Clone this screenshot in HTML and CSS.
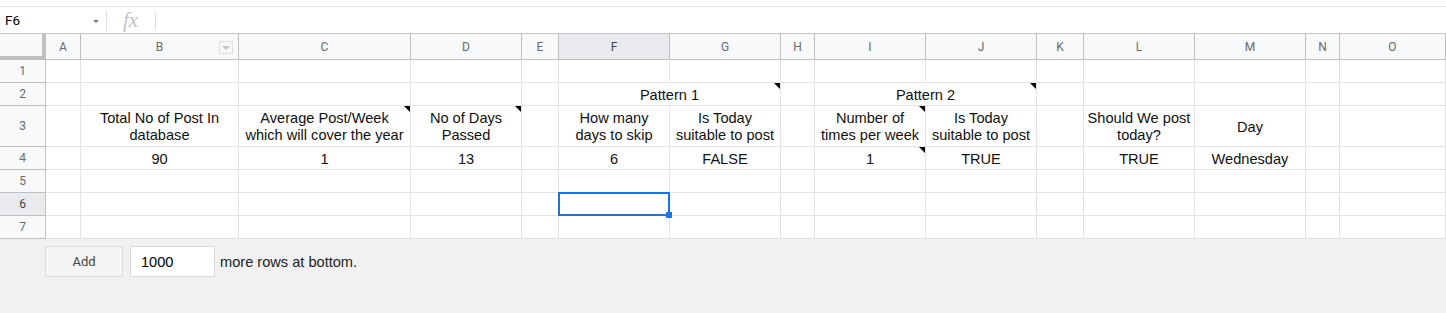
FILE: index.html
```html
<!DOCTYPE html>
<html>
<head>
<meta charset="utf-8">
<link rel="stylesheet" href="styles.css">
</head>
<body>
<div class="topgap"></div>
<div class="fbar">
  <div class="namebox"><span class="ref">F6</span><span class="caret"></span></div>
  <div class="fx">fx</div>
  <div class="finput"></div>
</div>
<div class="sheet">
  <!-- header row -->
  <div class="corner"></div>
  <div class="ch">A</div>
  <div class="ch chb">B<span class="filter"><span class="ftri"></span></span></div>
  <div class="ch">C</div>
  <div class="ch">D</div>
  <div class="ch">E</div>
  <div class="ch sel">F</div>
  <div class="ch">G</div>
  <div class="ch">H</div>
  <div class="ch">I</div>
  <div class="ch">J</div>
  <div class="ch">K</div>
  <div class="ch">L</div>
  <div class="ch">M</div>
  <div class="ch">N</div>
  <div class="ch">O</div>

  <!-- row 1 -->
  <div class="rh">1</div>
  <div class="c"></div><div class="c"></div><div class="c"></div><div class="c"></div><div class="c"></div>
  <div class="c"></div><div class="c"></div><div class="c"></div><div class="c"></div><div class="c"></div>
  <div class="c"></div><div class="c"></div><div class="c"></div><div class="c"></div><div class="c"></div>

  <!-- row 2 -->
  <div class="rh">2</div>
  <div class="c"></div><div class="c"></div><div class="c"></div><div class="c"></div><div class="c"></div>
  <div class="c span2 note">Pattern 1</div>
  <div class="c"></div>
  <div class="c span2 note">Pattern 2</div>
  <div class="c"></div><div class="c"></div><div class="c"></div><div class="c"></div><div class="c"></div>

  <!-- row 3 -->
  <div class="rh">3</div>
  <div class="c"></div>
  <div class="c">Total No of Post In<br>database</div>
  <div class="c note">Average Post/Week<br>which will cover the year</div>
  <div class="c note">No of Days<br>Passed</div>
  <div class="c"></div>
  <div class="c">How many<br>days to skip</div>
  <div class="c">Is Today<br>suitable to post</div>
  <div class="c"></div>
  <div class="c note">Number of<br>times per week</div>
  <div class="c">Is Today<br>suitable to post</div>
  <div class="c"></div>
  <div class="c">Should We post<br>today?</div>
  <div class="c">Day</div>
  <div class="c"></div>
  <div class="c"></div>

  <!-- row 4 -->
  <div class="rh">4</div>
  <div class="c"></div>
  <div class="c">90</div>
  <div class="c">1</div>
  <div class="c">13</div>
  <div class="c"></div>
  <div class="c">6</div>
  <div class="c">FALSE</div>
  <div class="c"></div>
  <div class="c note">1</div>
  <div class="c">TRUE</div>
  <div class="c"></div>
  <div class="c">TRUE</div>
  <div class="c">Wednesday</div>
  <div class="c"></div>
  <div class="c"></div>

  <!-- row 5 -->
  <div class="rh">5</div>
  <div class="c"></div><div class="c"></div><div class="c"></div><div class="c"></div><div class="c"></div>
  <div class="c"></div><div class="c"></div><div class="c"></div><div class="c"></div><div class="c"></div>
  <div class="c"></div><div class="c"></div><div class="c"></div><div class="c"></div><div class="c"></div>

  <!-- row 6 -->
  <div class="rh sel">6</div>
  <div class="c"></div><div class="c"></div><div class="c"></div><div class="c"></div><div class="c"></div>
  <div class="c active"><span class="selbox"><span class="handle"></span></span></div>
  <div class="c"></div><div class="c"></div><div class="c"></div><div class="c"></div>
  <div class="c"></div><div class="c"></div><div class="c"></div><div class="c"></div><div class="c"></div>

  <!-- row 7 -->
  <div class="rh">7</div>
  <div class="c"></div><div class="c"></div><div class="c"></div><div class="c"></div><div class="c"></div>
  <div class="c"></div><div class="c"></div><div class="c"></div><div class="c"></div><div class="c"></div>
  <div class="c"></div><div class="c"></div><div class="c"></div><div class="c"></div><div class="c"></div>
</div>
<div class="footer">
  <div class="addbtn">Add</div>
  <div class="rowsinput">1000</div>
  <div class="moretext">more rows at bottom.</div>
</div>
</body>
</html>
```

FILE: styles.css
```css
html, body {
  margin: 0;
  padding: 0;
  background: #ffffff;
  height: 100%;
}
body {
  font-family: "Liberation Sans", Arial, sans-serif;
  color: #000;
  overflow: hidden;
  display: flex;
  flex-direction: column;
}
.topgap {
  height: 6px;
  background: #fff;
}
.fbar {
  display: flex;
  align-items: stretch;
  height: 26px;
  border-top: 1px solid #e3e3e3;
  border-bottom: 1px solid #c4c7c5;
  background: #fff;
}
.namebox {
  width: 107px;
  box-sizing: border-box;
  display: flex;
  align-items: center;
  padding-left: 5px;
  position: relative;
  font-family: Roboto, "Liberation Sans", sans-serif;
  font-size: 13.5px;
  color: #000;
}
.namebox::after {
  content: "";
  position: absolute;
  right: 0;
  top: 3px;
  bottom: 2px;
  width: 1px;
  background: #e0e0e0;
}
.ref {
  flex: 1;
}
.caret {
  width: 0;
  height: 0;
  border-left: 3px solid transparent;
  border-right: 3px solid transparent;
  border-top: 3px solid #777;
  margin-right: 8px;
  margin-top: 2px;
}
.fx {
  width: 49px;
  box-sizing: border-box;
  display: flex;
  align-items: center;
  justify-content: center;
  font-family: "Liberation Serif", serif;
  font-style: italic;
  font-size: 21px;
  color: #c4c4c4;
  position: relative;
  padding-right: 2px;
}
.fx::after {
  content: "";
  position: absolute;
  right: 0;
  top: 5px;
  bottom: 3px;
  width: 1px;
  background: #e0e0e0;
}
.finput {
  flex: 1;
}

.sheet {
  display: grid;
  grid-template-columns: 46px 35px 158px 172px 111px 37px 111px 111px 34px 111px 111px 47px 111px 111px 34px 1fr;
  grid-template-rows: 26px 23px 23px 41px 23px 23px 23px 23px;
  background: #fff;
}
.corner {
  background: #f8f9fa;
  border-right: 4px solid #c0c0c0;
  border-bottom: 4px solid #c0c0c0;
  box-sizing: border-box;
}
.ch {
  background: #f8f9fa;
  border-right: 1px solid #c0c0c0;
  border-bottom: 1px solid #c0c0c0;
  box-sizing: border-box;
  display: flex;
  align-items: center;
  justify-content: center;
  font-family: Roboto, "Liberation Sans", sans-serif;
  font-size: 12px;
  color: #666a6e;
  position: relative;
}
.ch.sel, .rh.sel {
  background: #e8eaed;
  color: #44484c;
}
.filter {
  position: absolute;
  right: 5px;
  top: 7px;
  width: 12px;
  height: 11px;
  border: 1px solid #e0e0e0;
  background: #f8f9fa;
  display: flex;
  align-items: center;
  justify-content: center;
}
.ftri {
  width: 0;
  height: 0;
  border-left: 4px solid transparent;
  border-right: 4px solid transparent;
  border-top: 4px solid #c6c6c6;
}
.rh {
  background: #f8f9fa;
  border-right: 1px solid #c0c0c0;
  border-bottom: 1px solid #c0c0c0;
  box-sizing: border-box;
  display: flex;
  align-items: center;
  justify-content: center;
  font-family: Roboto, "Liberation Sans", sans-serif;
  font-size: 12px;
  color: #666a6e;
}
.c {
  border-right: 1px solid #e2e3e3;
  border-bottom: 1px solid #e2e3e3;
  box-sizing: border-box;
  display: flex;
  align-items: center;
  justify-content: center;
  text-align: center;
  font-size: 14.6px;
  line-height: 17px;
  white-space: nowrap;
  position: relative;
  padding: 2px 2px 0;
  color: #111;
}
.span2 {
  grid-column: span 2;
}
.note::after {
  content: "";
  position: absolute;
  top: 0;
  right: 0;
  width: 0;
  height: 0;
  border-top: 6px solid #000;
  border-left: 6px solid transparent;
}
.active {
  z-index: 2;
}
.selbox {
  position: absolute;
  top: -1px;
  left: -1px;
  right: -1px;
  bottom: -1px;
  border: 2px solid #1a73e8;
}
.handle {
  position: absolute;
  right: -4px;
  bottom: -4px;
  width: 6px;
  height: 6px;
  background: #1a73e8;
}

.footer {
  flex: 1;
  background: #f1f1f1;
  display: flex;
  align-items: flex-start;
  padding: 7px 0 0 45px;
}
.addbtn {
  width: 78px;
  height: 31px;
  box-sizing: border-box;
  border: 1px solid #dcdcdc;
  border-radius: 2px;
  background: #f5f5f5;
  display: flex;
  align-items: center;
  justify-content: center;
  font-family: Roboto, "Liberation Sans", sans-serif;
  font-size: 13px;
  color: #444;
}
.rowsinput {
  margin-left: 7px;
  width: 85px;
  height: 31px;
  box-sizing: border-box;
  border: 1px solid #d9d9d9;
  background: #fff;
  display: flex;
  align-items: center;
  padding-left: 10px;
  font-size: 14.6px;
  color: #000;
}
.moretext {
  margin-left: 5px;
  height: 31px;
  display: flex;
  align-items: center;
  font-size: 14.6px;
  color: #222;
}
```
